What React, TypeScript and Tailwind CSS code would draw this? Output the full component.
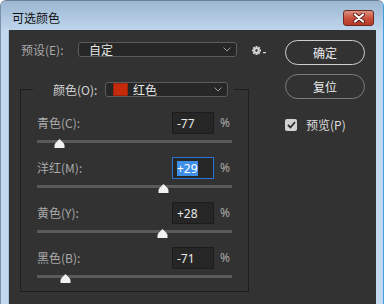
import React from "react";

const rows = [
  { label: "青色", key: "C", value: -77 },
  { label: "洋红", key: "M", value: 29, active: true },
  { label: "黄色", key: "Y", value: 28 },
  { label: "黑色", key: "B", value: -71 },
];

function Chevron() {
  return (
    <svg width="8" height="5" viewBox="0 0 8 5" className="shrink-0">
      <path d="M0.5 0.5 L4 4 L7.5 0.5" fill="none" stroke="#9a9a9a" strokeWidth="1" />
    </svg>
  );
}

function Thumb({ value }: { value: number }) {
  const left = ((value + 100) / 200) * 195 - 5;
  return (
    <svg
      width="11"
      height="9"
      viewBox="0 0 11 9"
      className="absolute top-[-1px]"
      style={{ left }}
    >
      <path d="M5.5 0 L9 3.5 Q10.5 5 10.5 6.5 L10.5 9 L0.5 9 L0.5 6.5 Q0.5 5 2 3.5 Z" fill="#f2f2f2" />
    </svg>
  );
}

export default function App() {
  const font = "font-['Noto_Sans_CJK_SC','Noto_Sans',sans-serif]";
  return (
    <div
      className={`w-[384px] h-[304px] flex flex-col overflow-hidden bg-[#c3d9ef] rounded-t-[6px] border-t border-l border-r border-t-[#6d7f92] border-l-[#7d90a4] border-r-[#3d9fe0] ${font}`}
    >
      {/* Title bar */}
      <div className="h-[29px] shrink-0 flex items-center justify-between pl-[11px] pr-[9px] bg-gradient-to-b from-[#9db7d2] to-[#bed5ec]">
        <span className="text-[12px] leading-[14px] text-[#111] mt-[4px]">可选颜色</span>
        <div className="w-[31px] h-[16px] mt-[4px] rounded-[3px] border border-[#6a2a22] bg-gradient-to-b from-[#dc8f80] via-[#c9513e] to-[#b53a26] flex items-center justify-center">
          <svg width="14" height="10" viewBox="0 0 14 10">
            <path d="M3 1.5 L11 8.5 M11 1.5 L3 8.5" stroke="#5a1a12" strokeWidth="4" strokeLinecap="round" />
            <path d="M3 1.5 L11 8.5 M11 1.5 L3 8.5" stroke="#ffffff" strokeWidth="2.2" strokeLinecap="round" />
          </svg>
        </div>
      </div>

      {/* Body */}
      <div className="flex-1 flex ml-[7px] mr-[7px] bg-[#323232] border-l border-[#a9c3dc]">
        {/* Left column */}
        <div className="w-[271px] shrink-0 pt-[12px]">
          {/* Preset row */}
          <div className="flex items-center h-[15px] pl-[12px]">
            <span className="w-[57px] text-[12px] leading-[14px] text-[#a9a9a9]">预设(E):</span>
            <div className="w-[159px] h-[15px] rounded-[3px] border border-[#5c5c5c] bg-[#272727] flex items-center pl-[10px] pr-[5px]">
              <span className="flex-1 text-[12px] leading-[12px] text-[#e6e6e6]">自定</span>
              <Chevron />
            </div>
            <svg width="16" height="10" viewBox="0 0 16 10" className="ml-[15px] mt-[3px]">
              <g fill="#d6d6d6">
                <circle cx="4.5" cy="4.5" r="3" />
                <rect x="3.5" y="0" width="2" height="9" />
                <rect x="0" y="3.5" width="9" height="2" />
                <rect x="3.5" y="0" width="2" height="9" transform="rotate(45 4.5 4.5)" />
                <rect x="3.5" y="0" width="2" height="9" transform="rotate(-45 4.5 4.5)" />
                <rect x="11" y="6" width="3" height="1.2" />
              </g>
              <circle cx="4.5" cy="4.5" r="1.2" fill="#323232" />
            </svg>
          </div>

          {/* Group */}
          <fieldset className="ml-[11px] mt-[25px] w-[229px] border border-[#1e1e1e] pb-[13px]">
            <legend className="ml-[12px] pl-[20px] pr-[6px]">
              <div className="flex items-center h-[15px]">
                <span className="w-[52px] text-[12px] leading-[14px] text-[#d4d4d4]">颜色(O):</span>
                <div className="w-[123px] h-[15px] rounded-[3px] border border-[#5c5c5c] bg-[#272727] flex items-center pl-[7px] pr-[5px]">
                  <div className="w-[15px] h-[13px] bg-[#c52a0a] border border-[#9c2208]" />
                  <span className="flex-1 ml-[5px] text-[12px] leading-[12px] text-[#e6e6e6]">红色</span>
                  <Chevron />
                </div>
              </div>
            </legend>

            <div className="flex flex-col gap-[14px] pt-[15px]">
              {rows.map((r) => (
                <div key={r.key} className="flex flex-col">
                  <div className="flex items-center h-[22px] pl-[16px]">
                    <span className="w-[135px] text-[12px] leading-[14px] text-[#a9a9a9]">
                      {r.label}({r.key}):
                    </span>
                    <div
                      className={`w-[42px] h-[22px] flex items-center pl-[4px] bg-[#262626] border ${
                        r.active ? "border-[#2a74d6]" : "border-[#1c1c1c]"
                      }`}
                    >
                      <span
                        className={`text-[12px] leading-[15px] font-['Noto_Sans',sans-serif] ${
                          r.active ? "bg-[#3f8fe8] text-white" : "text-[#e8e8e8]"
                        }`}
                      >
                        {r.value > 0 ? `+${r.value}` : `${r.value}`}
                      </span>
                    </div>
                    <span className="ml-[6px] text-[12px] leading-[14px] text-[#a9a9a9] font-['Noto_Sans',sans-serif]">%</span>
                  </div>
                  <div className="ml-[16px] mt-[6px] w-[195px] h-[3px] bg-[#5a5a5a] relative">
                    <Thumb value={r.value} />
                  </div>
                </div>
              ))}
            </div>
          </fieldset>
        </div>

        {/* Right column */}
        <div className="ml-[5px] pt-[10px] flex flex-col">
          <div className="w-[80px] h-[25px] rounded-full border-[1.5px] border-[#cfcfcf] flex items-center justify-center text-[12px] leading-[14px] text-[#eaeaea]">
            确定
          </div>
          <div className="mt-[9px] w-[80px] h-[25px] rounded-full border-[1.5px] border-[#7c7c7c] flex items-center justify-center text-[12px] leading-[14px] text-[#eaeaea]">
            复位
          </div>
          <div className="mt-[19px] flex items-center">
            <div className="w-[12px] h-[12px] rounded-[2px] bg-[#d2d2d2] flex items-center justify-center">
              <svg width="9" height="8" viewBox="0 0 9 8">
                <path d="M1 4 L3.5 6.5 L8 1" fill="none" stroke="#2d2d2d" strokeWidth="1.8" />
              </svg>
            </div>
            <span className="ml-[9px] text-[12px] leading-[14px] text-[#dcdcdc]">预览(P)</span>
          </div>
        </div>
      </div>
    </div>
  );
}
